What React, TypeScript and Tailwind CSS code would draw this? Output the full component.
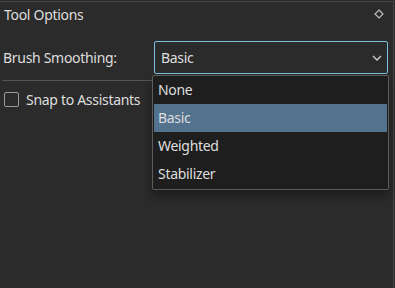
import React from "react";

export default function App() {
  const items = ["None", "Basic", "Weighted", "Stabilizer"];
  return (
    <div
      className="w-[395px] h-[288px] bg-[#2b2b2b] pt-px overflow-hidden"
      style={{ fontFamily: '"Noto Sans", "Open Sans", sans-serif' }}
    >
      <div className="relative w-[394px] h-[287px] border-t border-r border-[#474747] text-[14px] tracking-[-0.3px] text-[#dedede]">
        <div className="h-[25px] flex items-center justify-between pl-[4px] pr-[9px]">
          <span className="leading-none">Tool Options</span>
          <svg width="10" height="10" viewBox="0 0 10 10" className="-mt-[1px]">
            <path d="M5 1 L9 5 L5 9 L1 5 Z" fill="none" stroke="#bdbdbd" strokeWidth="1.2" />
          </svg>
        </div>
        <div className="mt-[14px] flex items-center">
          <span className="pl-[3px] w-[154px] leading-none">Brush Smoothing:</span>
          <div className="w-[234px] h-[33px] border border-[#7cbfe0] rounded-[2px] flex items-center justify-between pl-[6px] pr-[5px]">
            <span className="leading-none">Basic</span>
            <svg width="10" height="6" viewBox="0 0 10 6">
              <path d="M1 1 L5 5 L9 1" fill="none" stroke="#cfcfcf" strokeWidth="1.3" />
            </svg>
          </div>
        </div>
        <div className="mt-[6px] ml-[2px] w-[160px] h-px bg-[#555555]" />
        <div className="mt-[11px] flex items-center pl-[4px]">
          <div className="w-[15px] h-[15px] border border-[#9a9a9a] rounded-[2px]" />
          <span className="ml-[7px] leading-none">Snap to Assistants</span>
        </div>
        <div className="absolute left-[152px] top-[73px] w-[237px] bg-[#1e1e1e] border border-[#5c5c5c] rounded-[2px] pb-px px-px shadow-[0_6px_10px_rgba(0,0,0,0.35)]">
          {items.map((it) => (
            <div
              key={it}
              className={`h-[28px] flex items-center pl-[4px] ${it === "Basic" ? "bg-[#52728e]" : ""}`}
            >
              <span className="leading-none">{it}</span>
            </div>
          ))}
        </div>
      </div>
    </div>
  );
}
